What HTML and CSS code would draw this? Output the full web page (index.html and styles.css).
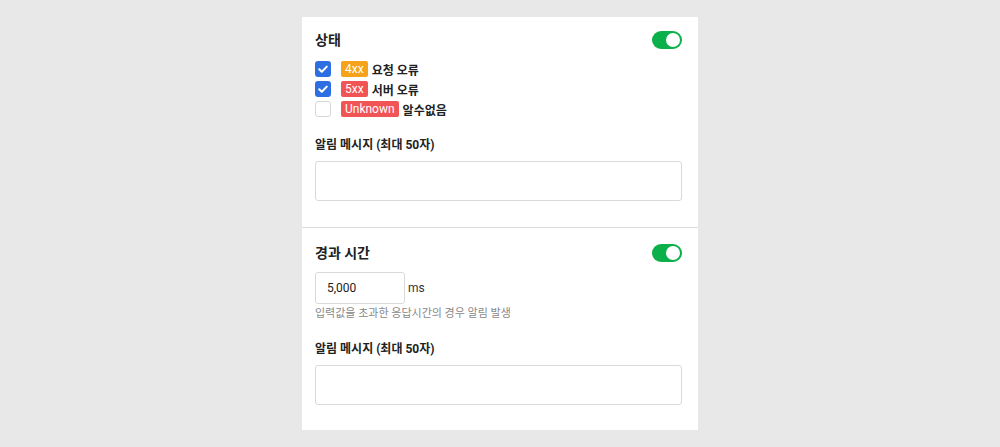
FILE: index.html
```html
<!DOCTYPE html>
<html lang="ko">
<head>
<meta charset="utf-8">
<link rel="stylesheet" href="styles.css">
</head>
<body>
<div class="card">
  <section class="panel panel-status">
    <div class="head">
      <h2 class="title">상태</h2>
      <span class="toggle on"><span class="knob"></span></span>
    </div>
    <ul class="checks">
      <li class="check-row">
        <span class="box checked"><svg viewBox="0 0 16 16" width="16" height="16"><path d="M4.2 8.3l2.6 2.5 5-5.2" fill="none" stroke="#fff" stroke-width="2" stroke-linecap="round" stroke-linejoin="round"/></svg></span>
        <span class="badge orange">4xx</span>
        <span class="check-label">요청 오류</span>
      </li>
      <li class="check-row">
        <span class="box checked"><svg viewBox="0 0 16 16" width="16" height="16"><path d="M4.2 8.3l2.6 2.5 5-5.2" fill="none" stroke="#fff" stroke-width="2" stroke-linecap="round" stroke-linejoin="round"/></svg></span>
        <span class="badge red">5xx</span>
        <span class="check-label">서버 오류</span>
      </li>
      <li class="check-row">
        <span class="box"></span>
        <span class="badge red">Unknown</span>
        <span class="check-label">알수없음</span>
      </li>
    </ul>
    <label class="field-label">알림 메시지 (최대 50자)</label>
    <div class="textbox"></div>
  </section>
  <section class="panel panel-time">
    <div class="head">
      <h2 class="title">경과 시간</h2>
      <span class="toggle on"><span class="knob"></span></span>
    </div>
    <div class="time-row">
      <div class="numbox">5,000</div>
      <span class="unit">ms</span>
    </div>
    <p class="hint">입력값을 초과한 응답시간의 경우 알림 발생</p>
    <label class="field-label">알림 메시지 (최대 50자)</label>
    <div class="textbox"></div>
  </section>
</div>
</body>
</html>
```
FILE: styles.css
```css
* { box-sizing: border-box; }
html, body { margin: 0; padding: 0; }
body {
  background: #e8e8e8;
  font-family: Roboto, "Noto Sans CJK KR", sans-serif;
  color: #222;
  height: 447px;
}
.card {
  width: 396px;
  margin: 17px auto 0;
  background: #fff;
}
.panel {
  padding: 0 16px 0 13px;
}
.panel-status {
  padding-top: 13px;
  padding-bottom: 26px;
  border-bottom: 1px solid #dcdcdc;
}
.panel-time {
  padding-top: 15px;
  padding-bottom: 25px;
}
.head {
  display: flex;
  align-items: center;
  justify-content: space-between;
  height: 20px;
}
.title {
  margin: 0;
  font-size: 14px;
  font-weight: 700;
  line-height: 20px;
  color: #222;
}
.toggle {
  width: 30px;
  height: 18px;
  border-radius: 9px;
  background: #0cb04a;
  display: flex;
  align-items: center;
  justify-content: flex-end;
  padding: 0 2px;
}
.knob {
  width: 14px;
  height: 14px;
  border-radius: 50%;
  background: #fff;
}
.checks {
  list-style: none;
  margin: 9px 0 0;
  padding: 0;
}
.check-row {
  display: flex;
  align-items: center;
  height: 20px;
}
.box {
  width: 16px;
  height: 16px;
  border-radius: 3px;
  border: 1px solid #d6d6d6;
  background: #fff;
  margin-right: 10px;
  display: flex;
  align-items: center;
  justify-content: center;
}
.box.checked {
  border: none;
  background: #2d6fe3;
}
.box svg { display: block; }
.badge {
  font-size: 12px;
  line-height: 16px;
  height: 16px;
  padding: 0 4px;
  color: #fff;
  border-radius: 2px;
  margin-right: 4px;
}
.badge.orange { background: #f7a21b; }
.badge.red { background: #f15454; }
.check-label {
  font-size: 12px;
  font-weight: 700;
  color: #222;
}
.field-label {
  display: block;
  margin-top: 17px;
  font-size: 12px;
  font-weight: 700;
  line-height: 18px;
  color: #222;
}
.textbox {
  margin-top: 7px;
  height: 40px;
  border: 1px solid #d9d9d9;
  border-radius: 3px;
}
.time-row {
  display: flex;
  align-items: center;
  margin-top: 9px;
}
.numbox {
  width: 90px;
  height: 32px;
  border: 1px solid #d9d9d9;
  border-radius: 3px;
  font-size: 12px;
  line-height: 30px;
  padding-left: 11px;
  color: #222;
}
.unit {
  margin-left: 3px;
  font-size: 12px;
  color: #333;
}
.hint {
  margin: 2px 0 0;
  font-size: 11px;
  line-height: 16px;
  color: #888;
}
.panel-time .field-label {
  margin-top: 18px;
}
```
